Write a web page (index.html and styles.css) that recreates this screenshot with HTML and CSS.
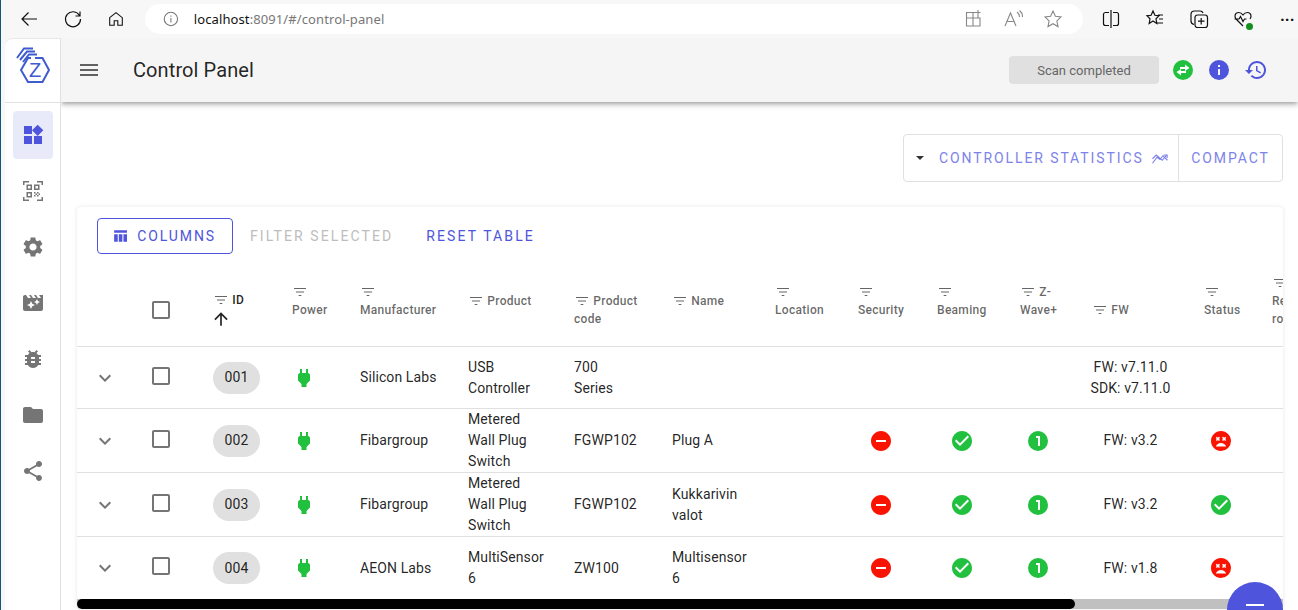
FILE: index.html
```html
<!DOCTYPE html>
<html lang="en">
<head>
    <meta charset="UTF-8">
    <title>Control Panel</title>
    <link rel="stylesheet" href="styles.css">
</head>
<body>
    <svg class="icon-defs">
        <symbol id="i-filter" viewBox="0 0 24 24"><path d="M10 18h4v-1.4h-4V18zM3 6v1.4h18V6H3zm3 6.7h12v-1.4H6v1.4z"/></symbol>
        <symbol id="i-arrow" viewBox="0 0 24 24"><path d="M4 12l1.41 1.41L11 7.83V20h2V7.83l5.58 5.59L20 12l-8-8-8 8z"/></symbol>
        <symbol id="i-chevron" viewBox="0 0 24 24"><path d="M7.41 8.59L12 13.17l4.59-4.58L18 10l-6 6-6-6 1.41-1.41z"/></symbol>
        <symbol id="i-box" viewBox="0 0 24 24"><path d="M19 5v14H5V5h14m0-2H5c-1.1 0-2 .9-2 2v14c0 1.1.9 2 2 2h14c1.1 0 2-.9 2-2V5c0-1.1-.9-2-2-2z"/></symbol>
        <symbol id="i-plug" viewBox="0 0 24 24"><path d="M16,7V3H14V7H10V3H8V7C7,7 6,8 6,9V14.5L9.5,18V21H14.5V18L18,14.5V9C18,8 17,7 16,7Z"/></symbol>
        <symbol id="i-minus" viewBox="0 0 24 24"><path d="M12 2C6.48 2 2 6.48 2 12s4.48 10 10 10 10-4.48 10-10S17.52 2 12 2zm5 11H7v-2h10v2z"/></symbol>
        <symbol id="i-check" viewBox="0 0 24 24"><path d="M12 2C6.5 2 2 6.5 2 12S6.5 22 12 22 22 17.5 22 12 17.5 2 12 2M10 17L5 12L6.41 10.59L10 14.17L17.59 6.58L19 8L10 17Z"/></symbol>
        <symbol id="i-one" viewBox="0 0 24 24"><path d="M10,7V9H12V17H14V7H10M12,2A10,10 0 0,1 22,12A10,10 0 0,1 12,22A10,10 0 0,1 2,12A10,10 0 0,1 12,2Z"/></symbol>
        <symbol id="i-dead" viewBox="0 0 24 24"><path d="M12,2C6.47,2 2,6.47 2,12C2,17.53 6.47,22 12,22A10,10 0 0,0 22,12C22,6.47 17.5,2 12,2M6.76,8.82L7.82,7.76L8.88,8.82L9.94,7.76L11,8.82L9.94,9.88L11,10.94L9.94,12L8.88,10.94L7.82,12L6.76,10.94L7.82,9.88L6.76,8.82M6.89,17.5C7.69,15.46 9.67,14 12,14C14.33,14 16.31,15.46 17.11,17.5H6.89M17.24,10.94L16.18,12L15.12,10.94L14.06,12L13,10.94L14.06,9.88L13,8.82L14.06,7.76L15.12,8.82L16.18,7.76L17.24,8.82L16.18,9.88L17.24,10.94Z"/></symbol>
    </svg>

    <!-- barra do navegador -->
    <div class="browser-bar">
        <svg class="br-icon br-back" viewBox="0 0 20 20"><path d="M18 10H3M9.5 3.5L3 10l6.5 6.5"/></svg>
        <svg class="br-icon br-reload" viewBox="0 0 20 20"><path d="M16.5 6.5A7.5 7.5 0 1 0 17.5 10M17 2.5v4.5h-4.5"/></svg>
        <svg class="br-icon br-home" viewBox="0 0 20 20"><path d="M3 8.5L10 3l7 5.500V17h-5v-5H8v5H3z"/></svg>
        <div class="address">
            <svg class="addr-info" viewBox="0 0 20 20"><circle cx="10" cy="10" r="7.500"/><path d="M10 9v5M10 6v1.500"/></svg>
            <span class="url"><span class="url-host">localhost</span>:8091/#/control-panel</span>
            <svg class="addr-icon addr-apps" viewBox="0 0 20 20"><path d="M15 9V3.500H3.500V17H17V9H3.500M10 3.500V17M15 1v5M12.500 3.500H17.500"/></svg>
            <svg class="addr-icon addr-read" viewBox="0 0 20 20"><path d="M2 17L7.500 4 13 17M4 12.500h7M14 3c1.500 1 2.500 3 2.500 5M16.500 1.500c2 1.500 3 4 3 6.500"/></svg>
            <svg class="addr-icon" viewBox="0 0 20 20"><path d="M10 2l2.400 5.300 5.600.7-4.100 3.900 1.100 5.700-5-2.900-5 2.900 1.100-5.700L2 8l5.600-.7z"/></svg>
        </div>
        <svg class="br-icon br-split" viewBox="0 0 20 20"><path d="M10 1v18M8 3.500H4.500a2 2 0 0 0-2 2v9a2 2 0 0 0 2 2H8M12 3.500h3.500a2 2 0 0 1 2 2v9a2 2 0 0 1-2 2H12"/></svg>
        <svg class="br-icon br-fav" viewBox="0 0 20 20"><path d="M8 2l1.900 4.300 4.100.5-3 3 .8 4.600L8 12l-3.800 2.400.8-4.600-3-3 4.100-.5zM13 6h5M14 10h4M12 14h6"/></svg>
        <svg class="br-icon br-coll" viewBox="0 0 20 20"><path d="M5 15.500c-2-.5-3-1.500-3-3.500V5.500C2 3.500 3.500 2 5.500 2H11c1.500 0 2.500.5 3 2"/><rect x="6" y="6" width="12.500" height="12.500" rx="2.500"/><path d="M12.200 9v6.500M9 12.200h6.500"/></svg>
        <span class="br-heart">
            <svg class="br-icon" viewBox="0 0 20 20"><path d="M10 17L3 10C1 7.500 2 3.500 5.500 3.500 7.500 3.500 9 4.500 10 6c1-1.500 2.500-2.500 4.500-2.500C18 3.500 19 7.500 17 10M1.500 10H6l1.500-2.500 2.500 5 1.500-2.500h2"/></svg>
            <span class="heart-dot"></span>
        </span>
        <span class="br-dots">&middot;&middot;&middot;</span>
    </div>

    <div class="app">
        <aside class="sidebar">
            <div class="logo">
                <svg viewBox="16 47 34 37" class="logo-svg">
                    <path d="M31 58H28L21 70l7 12h14.500L49 70l-6.500-12H35"/>
                    <path d="M17 58l7-9.500h9M20 60l7-8.500h8M23 62l6-7.500h8"/>
                    <text x="35" y="77" class="logo-z">Z</text>
                </svg>
            </div>
            <nav class="nav">
                <a class="nav-item active"><svg viewBox="0 0 24 24"><path d="M13 13v8h8v-8h-8zM3 21h8v-8H3v8zM3 3v8h8V3H3zm13.660-1.310L11 7.340 16.660 13l5.660-5.660-5.660-5.650z"/></svg></a>
                <a class="nav-item"><svg viewBox="0 0 24 24"><path d="M2 2h6v1.500H3.500V6H2zM16 2h6v4h-1.500V3.500H16zM2 18h1.500v2.500H8V22H2zM20.500 18H22v4h-6v-1.500h4.500z"/><path d="M5.500 5.500H11V11H5.500zM7 7v2.500h2.500V7zM13 5.500h5.500V11H13zM14.500 7v2.500H17V7zM5.500 13H11v5.500H5.500zM7 14.500V17h2.500v-2.500z"/><path d="M13 13h1.500v1.500H13zM16 13h1.500v1.500H16zM14.500 14.500H16V16h-1.500zM17.500 14.500H19V16h-1.500zM13 16h1.500v1.500H13zM16 16h1.500v1.500H16z"/></svg></a>
                <a class="nav-item"><svg viewBox="0 0 24 24"><path d="M19.140 12.940c.04-.3.060-.61.060-.94 0-.32-.02-.64-.07-.94l2.030-1.580c.18-.14.23-.41.12-.61l-1.920-3.320c-.12-.22-.37-.29-.59-.22l-2.390.96c-.5-.38-1.030-.7-1.620-.94l-.36-2.540c-.04-.24-.24-.41-.48-.41h-3.840c-.24 0-.43.17-.47.41l-.36 2.540c-.59.24-1.130.57-1.620.94l-2.390-.96c-.22-.08-.47 0-.59.22L2.740 8.870c-.12.21-.08.47.12.61l2.030 1.580c-.05.3-.09.63-.09.94s.02.64.07.94l-2.030 1.580c-.18.14-.23.41-.12.61l1.920 3.320c.12.22.37.29.59.22l2.390-.96c.5.38 1.030.7 1.620.94l.36 2.540c.05.24.24.41.48.41h3.840c.24 0 .44-.17.47-.41l.36-2.540c.59-.24 1.130-.56 1.620-.94l2.390.96c.22.08.47 0 .59-.22l1.920-3.320c.12-.22.07-.47-.12-.61l-2.010-1.580zM12 15.600c-1.980 0-3.600-1.620-3.600-3.600s1.620-3.600 3.600-3.600 3.600 1.620 3.600 3.600-1.620 3.600-3.600 3.600z"/></svg></a>
                <a class="nav-item"><svg viewBox="0 0 24 24"><path d="M18 4l2 3h-3l-2-3h-2l2 3h-3l-2-3H8l2 3H7L5 4H4c-1.100 0-1.990.9-1.990 2L2 18c0 1.100.9 2 2 2h16c1.100 0 2-.9 2-2V4h-4zm-6.750 11.250L10 18l-1.250-2.750L6 14l2.750-1.250L10 10l1.250 2.750L14 14l-2.750 1.250zm5.690-3.310L16 14l-.94-2.060L13 11l2.060-.94L16 8l.94 2.060L19 11l-2.060.94z"/></svg></a>
                <a class="nav-item"><svg viewBox="0 0 24 24"><path d="M14,12H10V10H14M14,16H10V14H14M20,8H17.190C16.740,7.220 16.120,6.550 15.370,6.040L17,4.410L15.590,3L13.420,5.170C12.960,5.060 12.500,5 12,5C11.500,5 11.040,5.060 10.590,5.170L8.410,3L7,4.410L8.620,6.040C7.880,6.550 7.260,7.220 6.810,8H4V10H6.090C6.040,10.330 6,10.660 6,11V12H4V14H6V15C6,15.340 6.040,15.670 6.090,16H4V18H6.810C8.470,20.870 12.140,21.840 15,20.190C15.910,19.660 16.670,18.910 17.190,18H20V16H17.910C17.960,15.670 18,15.340 18,15V14H20V12H18V11C18,10.660 17.960,10.330 17.910,10H20V8Z"/></svg></a>
                <a class="nav-item"><svg viewBox="0 0 24 24"><path d="M10 4H4c-1.100 0-2 .9-2 2v12c0 1.100.9 2 2 2h16c1.100 0 2-.9 2-2V8c0-1.100-.9-2-2-2h-8l-2-2z"/></svg></a>
                <a class="nav-item"><svg viewBox="0 0 24 24"><path d="M18 16.080c-.76 0-1.440.3-1.960.77L8.910 12.700c.05-.23.09-.46.09-.7s-.04-.47-.09-.7l7.050-4.110c.54.5 1.250.81 2.040.81 1.660 0 3-1.340 3-3s-1.340-3-3-3-3 1.340-3 3c0 .24.04.47.09.7L8.040 9.810C7.500 9.310 6.790 9 6 9c-1.660 0-3 1.340-3 3s1.340 3 3 3c.79 0 1.500-.31 2.040-.81l7.120 4.160c-.05.21-.08.43-.08.65 0 1.610 1.310 2.920 2.920 2.920 1.610 0 2.920-1.310 2.920-2.920s-1.310-2.920-2.920-2.920z"/></svg></a>
            </nav>
        </aside>

        <div class="main">
            <header class="appbar">
                <button class="menu-btn"><span></span><span></span><span></span></button>
                <h1 class="page-title">Control Panel</h1>
                <div class="scan-pill">Scan completed</div>
                <svg class="bar-icon bar-swap" viewBox="0 0 24 24"><circle cx="12" cy="12" r="10"/><path class="swap-arrows" d="M9 9h5V6.500L18.500 10 14 13v-2H9zM15 15h-5v2.500L5.500 14 10 11v2h5z"/></svg>
                <svg class="bar-icon bar-info" viewBox="0 0 24 24"><path d="M13,9H11V7H13M13,17H11V11H13M12,2A10,10 0 0,0 2,12A10,10 0 0,0 12,22A10,10 0 0,0 22,12A10,10 0 0,0 12,2Z"/></svg>
                <svg class="bar-icon bar-history" viewBox="0 0 24 24"><path d="M13 3c-4.970 0-9 4.030-9 9H1l3.890 3.890.07.14L9 12H6c0-3.870 3.130-7 7-7s7 3.130 7 7-3.130 7-7 7c-1.930 0-3.680-.79-4.940-2.060l-1.420 1.420C8.270 19.990 10.510 21 13 21c4.970 0 9-4.030 9-9s-4.030-9-9-9zm-1 5v5l4.280 2.540.72-1.210-3.500-2.080V8H12z"/></svg>
            </header>

            <div class="content">
                <div class="toggle-row">
                    <div class="toggle-group">
                        <div class="toggle-item stats">
                            <span class="caret"></span>
                            <span class="toggle-text">CONTROLLER STATISTICS</span>
                            <svg class="stats-icon" viewBox="0 0 24 24"><path d="M2 19l6-8 4 3 4-5 6 6M2 13l5-5 8 7 6-7M17 8h4.500v4"/></svg>
                        </div>
                        <div class="toggle-item compact"><span class="toggle-text">COMPACT</span></div>
                    </div>
                </div>

                <section class="card">
                    <div class="toolbar">
                        <button class="btn btn-outlined">
                            <svg viewBox="0 0 24 24"><path d="M3 4h18v3.500H3zM3 9.500h5V20H3zM9.500 9.500h5V20h-5zM16 9.500h5V20h-5z"/></svg>
                            COLUMNS
                        </button>
                        <button class="btn btn-disabled">FILTER SELECTED</button>
                        <button class="btn btn-text">RESET TABLE</button>
                    </div>

                    <div class="table-wrap">
                        <table class="nodes">
                            <colgroup>
                                <col class="c60"><col class="c60"><col class="c79"><col class="c68"><col class="c108"><col class="c106"><col class="c98"><col class="c103"><col class="c83"><col class="c79"><col class="c83"><col class="c71"><col class="c113"><col class="c68"><col class="c200">
                            </colgroup>
                            <thead>
                                <tr>
                                    <th></th>
                                    <th class="cell-check"><svg class="ico-box head-box"><use href="#i-box"/></svg></th>
                                    <th class="th-sorted"><svg class="ico-filter"><use href="#i-filter"/></svg> ID<br><svg class="ico-arrow sort-on"><use href="#i-arrow"/></svg></th>
                                    <th><svg class="ico-filter"><use href="#i-filter"/></svg> Power <svg class="ico-arrow hide"><use href="#i-arrow"/></svg></th>
                                    <th><svg class="ico-filter"><use href="#i-filter"/></svg> Manufacturer <svg class="ico-arrow hide"><use href="#i-arrow"/></svg></th>
                                    <th><svg class="ico-filter"><use href="#i-filter"/></svg> Product<br><svg class="ico-arrow hide"><use href="#i-arrow"/></svg></th>
                                    <th><svg class="ico-filter"><use href="#i-filter"/></svg> Product code</th>
                                    <th><svg class="ico-filter"><use href="#i-filter"/></svg> Name<br><svg class="ico-arrow hide"><use href="#i-arrow"/></svg></th>
                                    <th><svg class="ico-filter"><use href="#i-filter"/></svg> Location <svg class="ico-arrow hide"><use href="#i-arrow"/></svg></th>
                                    <th><svg class="ico-filter"><use href="#i-filter"/></svg> Security <svg class="ico-arrow hide"><use href="#i-arrow"/></svg></th>
                                    <th><svg class="ico-filter"><use href="#i-filter"/></svg> Beaming <svg class="ico-arrow hide"><use href="#i-arrow"/></svg></th>
                                    <th><svg class="ico-filter"><use href="#i-filter"/></svg> Z-<br>Wave+<br><svg class="ico-arrow hide"><use href="#i-arrow"/></svg></th>
                                    <th class="th-fw"><svg class="ico-filter"><use href="#i-filter"/></svg> FW</th>
                                    <th><svg class="ico-filter"><use href="#i-filter"/></svg> Status <svg class="ico-arrow hide"><use href="#i-arrow"/></svg></th>
                                    <th class="th-last"><svg class="ico-filter"><use href="#i-filter"/></svg> Rebuild routes <svg class="ico-arrow hide"><use href="#i-arrow"/></svg></th>
                                </tr>
                            </thead>
                            <tbody>
                                <tr>
                                    <td><svg class="ico-chev"><use href="#i-chevron"/></svg></td>
                                    <td class="cell-check"><svg class="ico-box"><use href="#i-box"/></svg></td>
                                    <td><span class="chip">001</span></td>
                                    <td><svg class="ico-24 green"><use href="#i-plug"/></svg></td>
                                    <td class="nowrap">Silicon Labs</td>
                                    <td>USB Controller</td>
                                    <td>700<br>Series</td>
                                    <td></td>
                                    <td></td>
                                    <td></td>
                                    <td></td>
                                    <td></td>
                                    <td class="center nowrap">FW: v7.11.0<br>SDK: v7.11.0</td>
                                    <td></td>
                                    <td></td>
                                </tr>
                                <tr>
                                    <td><svg class="ico-chev"><use href="#i-chevron"/></svg></td>
                                    <td class="cell-check"><svg class="ico-box"><use href="#i-box"/></svg></td>
                                    <td><span class="chip">002</span></td>
                                    <td><svg class="ico-24 green"><use href="#i-plug"/></svg></td>
                                    <td>Fibargroup</td>
                                    <td>Metered Wall Plug Switch</td>
                                    <td>FGWP102</td>
                                    <td>Plug A</td>
                                    <td></td>
                                    <td class="center"><svg class="ico-24 red"><use href="#i-minus"/></svg></td>
                                    <td class="center"><svg class="ico-24 green"><use href="#i-check"/></svg></td>
                                    <td class="center zwave"><svg class="ico-24 green"><use href="#i-one"/></svg></td>
                                    <td class="center">FW: v3.2</td>
                                    <td class="center"><svg class="ico-24 red"><use href="#i-dead"/></svg></td>
                                    <td></td>
                                </tr>
                                <tr>
                                    <td><svg class="ico-chev"><use href="#i-chevron"/></svg></td>
                                    <td class="cell-check"><svg class="ico-box"><use href="#i-box"/></svg></td>
                                    <td><span class="chip">003</span></td>
                                    <td><svg class="ico-24 green"><use href="#i-plug"/></svg></td>
                                    <td>Fibargroup</td>
                                    <td>Metered Wall Plug Switch</td>
                                    <td>FGWP102</td>
                                    <td>Kukkarivin valot</td>
                                    <td></td>
                                    <td class="center"><svg class="ico-24 red"><use href="#i-minus"/></svg></td>
                                    <td class="center"><svg class="ico-24 green"><use href="#i-check"/></svg></td>
                                    <td class="center zwave"><svg class="ico-24 green"><use href="#i-one"/></svg></td>
                                    <td class="center">FW: v3.2</td>
                                    <td class="center"><svg class="ico-24 green"><use href="#i-check"/></svg></td>
                                    <td></td>
                                </tr>
                                <tr class="last-row">
                                    <td><svg class="ico-chev"><use href="#i-chevron"/></svg></td>
                                    <td class="cell-check"><svg class="ico-box"><use href="#i-box"/></svg></td>
                                    <td><span class="chip">004</span></td>
                                    <td><svg class="ico-24 green"><use href="#i-plug"/></svg></td>
                                    <td class="nowrap">AEON Labs</td>
                                    <td>MultiSensor 6</td>
                                    <td>ZW100</td>
                                    <td>Multisensor 6</td>
                                    <td></td>
                                    <td class="center"><svg class="ico-24 red"><use href="#i-minus"/></svg></td>
                                    <td class="center"><svg class="ico-24 green"><use href="#i-check"/></svg></td>
                                    <td class="center zwave"><svg class="ico-24 green"><use href="#i-one"/></svg></td>
                                    <td class="center">FW: v1.8</td>
                                    <td class="center"><svg class="ico-24 red"><use href="#i-dead"/></svg></td>
                                    <td></td>
                                </tr>
                            </tbody>
                        </table>
                    </div>
                    <div class="scroll-track"><div class="scroll-thumb"></div></div>
                </section>
            </div>

            <button class="fab"><span></span><span></span></button>
        </div>
    </div>
</body>
</html>
```

FILE: styles.css
```css
* {
    box-sizing: border-box;
}
html,
body {
    margin: 0;
    height: 610px;
    overflow: hidden;
}
body {
    font-family: Roboto, "Liberation Sans", sans-serif;
    font-size: 14px;
    color: rgba(0, 0, 0, 0.87);
    background-color: #f7f7f7;
    border-left: 1px solid #0f5878;
}
.icon-defs {
    display: none;
}

/* barra do navegador */
.browser-bar {
    height: 38px;
    position: relative;
    display: flex;
    align-items: center;
    padding-left: 18px;
}
.br-icon {
    width: 20px;
    height: 20px;
    fill: none;
    stroke: #111;
    stroke-width: 1.200;
    flex: none;
}
.br-reload {
    margin-left: 24px;
}
.br-home {
    margin-left: 24px;
    width: 18px;
}
.address {
    width: 938px;
    height: 30px;
    margin-left: 20px;
    background-color: #fff;
    border-radius: 15px;
    display: flex;
    align-items: center;
    padding-left: 17px;
    flex: none;
}
.addr-info {
    width: 18px;
    height: 18px;
    fill: none;
    stroke: #777;
    stroke-width: 1.200;
}
.url {
    font-family: "Noto Sans", sans-serif;
    font-size: 13px;
    letter-spacing: 0.100px;
    color: #777;
    margin-left: 14px;
    width: 772px;
}
.url-host {
    color: #111;
}
.addr-icon {
    width: 20px;
    height: 20px;
    fill: none;
    stroke: #888;
    stroke-width: 1.100;
    margin-right: 20px;
    flex: none;
}
.addr-apps {
    margin-left: 6px;
}
.br-split {
    margin-left: 18px;
}
.br-fav {
    margin-left: 24px;
}
.br-coll {
    margin-left: 24px;
}
.br-heart {
    margin-left: 24px;
    position: relative;
    width: 20px;
    height: 20px;
}
.heart-dot {
    position: absolute;
    right: 0;
    bottom: -1px;
    width: 7px;
    height: 7px;
    border-radius: 50%;
    background-color: #15901f;
}
.br-dots {
    margin-left: 27px;
    font-weight: 700;
    font-size: 16px;
    color: #111;
}

/* app */
.app {
    display: flex;
    height: 572px;
    margin-left: 4px;
}
.sidebar {
    width: 56px;
    flex: none;
    background-color: #fff;
    border-right: 1px solid #e0e0e0;
    border-top: 1px solid #e8e8e8;
    border-top-left-radius: 8px;
}
.logo {
    height: 64px;
    border-bottom: 1px solid #e0e0e0;
    display: flex;
    justify-content: center;
    padding-top: 8px;
}
.logo-svg {
    width: 34px;
    height: 37px;
    fill: none;
    stroke: #3f5bd0;
    stroke-width: 2;
}
.logo-z {
    font-family: "Liberation Sans", sans-serif;
    font-size: 20px;
    fill: #3f5bd0;
    stroke: none;
    text-anchor: middle;
}
.nav {
    padding-top: 8px;
    display: flex;
    flex-direction: column;
    gap: 8px;
}
.nav-item {
    width: 40px;
    height: 48px;
    margin-left: 8px;
    border-radius: 4px;
    display: flex;
    align-items: center;
    justify-content: center;
}
.nav-item svg {
    width: 24px;
    height: 24px;
    fill: #757575;
}
.nav-item.active {
    background-color: #e8eafa;
}
.nav-item.active svg {
    fill: #4e54dc;
}

.main {
    flex: 1;
    position: relative;
    min-width: 0;
    background-color: #fff;
    overflow: hidden;
}
.appbar {
    height: 64px;
    background-color: #f5f5f5;
    box-shadow: 0 2px 4px -1px rgba(0, 0, 0, 0.3), 0 4px 5px 0 rgba(0, 0, 0, 0.14);
    display: flex;
    align-items: center;
    padding-left: 19px;
    position: relative;
}
.menu-btn {
    width: 18px;
    height: 12px;
    padding: 0;
    border: none;
    background: none;
    display: flex;
    flex-direction: column;
    justify-content: space-between;
}
.menu-btn span {
    display: block;
    height: 2px;
    background-color: #616161;
}
.page-title {
    margin: 0 0 0 35px;
    font-size: 20px;
    font-weight: 400;
    letter-spacing: 0.100px;
    width: 876px;
    color: rgba(0, 0, 0, 0.87);
}
.scan-pill {
    width: 150px;
    height: 28px;
    background-color: #e0e0e0;
    border-radius: 4px;
    font-size: 13px;
    color: #666;
    display: flex;
    align-items: center;
    justify-content: center;
}
.bar-icon {
    width: 24px;
    height: 24px;
    flex: none;
}
.bar-swap {
    margin-left: 12px;
    fill: #22c03f;
}
.swap-arrows {
    fill: #fff;
}
.bar-info {
    margin-left: 12px;
    fill: #4e54dc;
}
.bar-history {
    margin-left: 13px;
    fill: #4e54dc;
}

.content {
    padding: 32px 15px 0 16px;
}
.toggle-row {
    display: flex;
    justify-content: flex-end;
}
.toggle-group {
    display: flex;
    width: 380px;
    height: 48px;
    border: 1px solid #e0e0e0;
    border-radius: 4px;
}
.toggle-item {
    display: flex;
    align-items: center;
}
.toggle-item.stats {
    width: 275px;
    padding-left: 12px;
    border-right: 1px solid #e0e0e0;
}
.toggle-item.compact {
    flex: 1;
    justify-content: center;
}
.caret {
    width: 0;
    height: 0;
    border-left: 4.500px solid transparent;
    border-right: 4.500px solid transparent;
    border-top: 4.500px solid #333;
    margin-right: 15px;
}
.toggle-text {
    letter-spacing: 1.900px;
    color: #7d83e8;
}
.stats-icon {
    width: 18px;
    height: 18px;
    margin-left: 7px;
    fill: none;
    stroke: #7d83e8;
    stroke-width: 1.500;
}

.card {
    margin-top: 25px;
    background-color: #fff;
    border-radius: 4px;
    box-shadow: 0 0 4px rgba(0, 0, 0, 0.1);
    overflow: hidden;
}
.toolbar {
    height: 65px;
    padding: 11px 0 0 20px;
    display: flex;
    align-items: flex-start;
    gap: 1px;
}
.btn {
    height: 36px;
    padding: 0 16px;
    background: none;
    border: none;
    border-radius: 4px;
    font-family: Roboto, sans-serif;
    font-size: 14px;
    letter-spacing: 2.100px;
    display: flex;
    align-items: center;
}
.btn-outlined {
    width: 136px;
    letter-spacing: 1.900px;
    color: #4e54dc;
    border: 1px solid #4e54dc;
}
.btn-outlined svg {
    width: 18px;
    height: 18px;
    fill: #4e54dc;
    margin-right: 8px;
    margin-left: -2px;
}
.btn-disabled {
    color: #bdbdbd;
}
.btn-text {
    color: #4e54dc;
}

.table-wrap {
    overflow: hidden;
}
.nodes {
    width: 1379px;
    table-layout: fixed;
    border-collapse: separate;
    border-spacing: 0;
}
.c60 { width: 60px; }
.c68 { width: 68px; }
.c71 { width: 71px; }
.c79 { width: 79px; }
.c83 { width: 83px; }
.c98 { width: 98px; }
.c103 { width: 103px; }
.c106 { width: 106px; }
.c108 { width: 108px; }
.c113 { width: 113px; }
.c200 { width: 200px; }

.nodes th {
    height: 75px;
    padding: 1px 16px 0;
    text-align: left;
    font-size: 12px;
    font-weight: 500;
    letter-spacing: 0.300px;
    line-height: 18px;
    color: rgba(0, 0, 0, 0.6);
    border-bottom: 1px solid #e0e0e0;
}
.nodes .th-sorted {
    color: rgba(0, 0, 0, 0.87);
}
.nodes .th-fw {
    text-align: center;
    padding-right: 58px;
}
.nodes .th-last {
    padding-right: 150px;
}
.nodes td {
    padding: 0 16px;
    line-height: 21px;
    height: 62px;
    letter-spacing: 0.100px;
    border-bottom: 1px solid #e0e0e0;
}
.last-row td {
    border-bottom: none;
}
.nodes .cell-check {
    padding-left: 12px;
}
.nodes .center {
    text-align: center;
    padding-right: 18px;
}
.nodes .zwave {
    padding-right: 20px;
}
.nodes .nowrap {
    white-space: nowrap;
}
.nodes .center.nowrap {
    padding-left: 0;
    padding-right: 2px;
}
.ico-filter,
.ico-arrow {
    width: 16px;
    height: 16px;
    vertical-align: middle;
    fill: rgba(0, 0, 0, 0.6);
}
.ico-arrow {
    fill: rgba(0, 0, 0, 0.87);
}
.sort-on {
    width: 20px;
    height: 20px;
    margin-left: -2px;
}
.hide {
    visibility: hidden;
}
.ico-chev {
    width: 24px;
    height: 24px;
    vertical-align: middle;
    fill: #757575;
}
.ico-box {
    width: 24px;
    height: 24px;
    vertical-align: middle;
    fill: #757575;
    margin-bottom: 4px;
}
.head-box {
    margin-bottom: 0;
}
.ico-24 {
    width: 24px;
    height: 24px;
    vertical-align: middle;
}
.green {
    fill: #22c03f;
}
.red {
    fill: #f91402;
}
.chip {
    display: inline-flex;
    align-items: center;
    justify-content: center;
    width: 47px;
    height: 32px;
    border-radius: 16px;
    background-color: #e0e0e0;
}

.scroll-track {
    height: 10px;
    background-color: #c0c0c0;
}
.scroll-thumb {
    width: 998px;
    height: 10px;
    background-color: #000;
    border-radius: 5px;
}

.fab {
    position: absolute;
    left: 1166px;
    top: 544px;
    width: 56px;
    height: 56px;
    padding: 22px 0 0;
    border: none;
    border-radius: 50%;
    background-color: #4e54dc;
    display: flex;
    flex-direction: column;
    align-items: center;
    gap: 6px;
}
.fab span {
    display: block;
    width: 18px;
    height: 2px;
    background-color: #fff;
}
```
